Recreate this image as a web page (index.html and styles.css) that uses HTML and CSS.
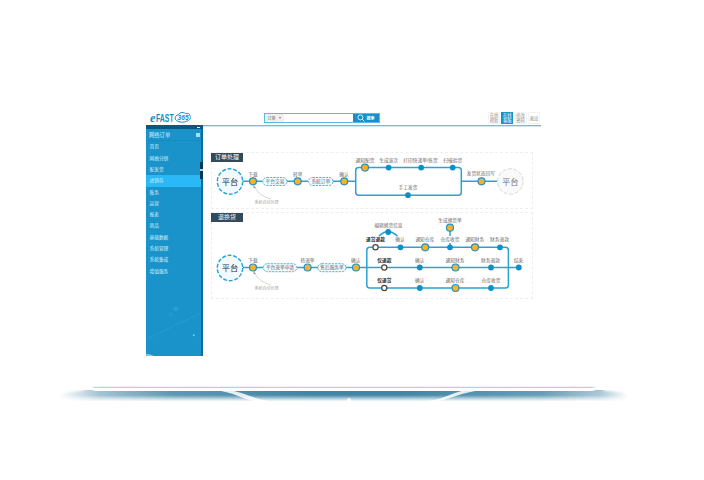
FILE: index.html
```
<!DOCTYPE html>
<html>
<head>
<meta charset="utf-8">
<title>eFAST 365</title>
<link rel="stylesheet" href="styles.css">
</head>
<body>
<div class="screen">
  <header class="topbar">
    <svg class="logo" width="48" height="14" viewBox="148 111 48 14">
      <text x="150" y="122.300" class="logo-e" textLength="5.500" lengthAdjust="spacingAndGlyphs">e</text>
      <text x="156" y="122" class="logo-name" textLength="17.700" lengthAdjust="spacingAndGlyphs">FAST</text>
      <path d="M178 121.300c-4-1-3.400-6 .2-6.500c1.800-3 6-2.600 7.300-1.200c2-.8 4.300.1 4.300 2c1.700 2.500-.5 5.500-3.300 5.500c-2.500 1.400-6 1.500-8.500.2z" class="cloud"/>
      <text x="177.600" y="120.200" class="logo-num" textLength="11" lengthAdjust="spacingAndGlyphs">365</text>
    </svg>
    <div class="search">
      <span class="kind">订单<i class="caret"></i></span>
      <span class="field"></span>
      <span class="go"><svg width="8" height="8" viewBox="0 0 8 8"><circle cx="3.400" cy="3.400" r="2.500"/><path d="M5.300 5.300L7.400 7.400"/></svg>搜索</span>
    </div>
    <nav class="tools">
      <span>在线<br>帮助</span><span class="on">在线<br>客服</span><span>修改<br>密码</span><span>退出</span>
    </nav>
  </header>
  <div class="main">
    <aside class="side">
      <div class="strip"><i></i></div>
      <div class="side-title">网络订单<i></i></div>
      <ul>
        <li>首页</li><li>网络分销</li><li>配发货</li><li class="active">进销存</li><li>账务</li><li>运营</li><li>报表</li><li>商品</li><li>基础数据</li><li>系统管理</li><li>系统集成</li><li>增值服务</li>
      </ul>
      <svg class="glow" width="55" height="80" viewBox="0 0 55 80">
        <path d="M0 63L54 37" class="ray"/>
        <circle cx="30" cy="32" r="2.500" class="spot"/><circle cx="25" cy="38" r="2" class="spot faint"/><circle cx="48" cy="59" r="1" class="star"/>
        <path d="M0 77.500Q5 78 8 80H0z" class="star"/>
      </svg>
      <div class="handle"></div>
    </aside>
    <main class="content">
      <section class="panel orders">
        <h2>订单处理</h2>
        <svg class="flow" width="322" height="57" viewBox="211 152 322 57">
          <g class="wire">
            <path d="M243 181.300H262.500M287 181.300H308M333 181.300H355.500M461.500 181.300H497"/>
            <rect x="355.700" y="167.500" width="105.600" height="27.700" rx="3"/>
          </g>
          <circle cx="230" cy="181.500" r="12.700" class="hub"/><text x="230" y="184.700" class="hub-text">平台</text>
          <circle cx="510.300" cy="181.500" r="12.700" class="hub end"/><text x="510.300" y="184.700" class="hub-text end-text">平台</text>
          <rect x="262.800" y="177.500" width="24.200" height="8" rx="4" class="pill"/><rect x="308.600" y="177.500" width="24.400" height="8" rx="4" class="pill"/>
          <g class="key"><circle cx="253" cy="181.300" r="3.500"/><circle cx="297.700" cy="181.300" r="3.500"/><circle cx="344.200" cy="181.300" r="3.500"/><circle cx="365" cy="167.600" r="3.500"/><circle cx="481.500" cy="181.300" r="3.500"/></g>
          <g class="dot"><circle cx="388.600" cy="167.600" r="2.900"/><circle cx="421.200" cy="167.600" r="2.900"/><circle cx="452.700" cy="167.600" r="2.900"/><circle cx="408" cy="195.200" r="2.900"/></g>
          <g class="label">
            <text x="253" y="175.500">下载</text><text x="297.700" y="175.500">转单</text><text x="344" y="175.500">确认</text>
            <text x="275" y="183.200">平台交易</text><text x="320.800" y="183.200">系统订单</text>
            <text x="365" y="161.700">通知配货</text><text x="388.700" y="161.700">生成波次</text><text x="420.500" y="161.700" textLength="34.500">打印快递单/拣货</text><text x="452.700" y="161.700">扫描验货</text>
            <text x="408" y="189.300">手工发货</text><text x="480.800" y="175.200">发货状态回写</text>
          </g>
          <path d="M254.500 187Q259 196 271 199" class="note-line"/><path d="M253.500 185.500l2.300 2-2 .7z" class="tip"/>
          <text x="266.500" y="203.500" class="note">系统自动处理</text>
        </svg>
      </section>
      <section class="panel returns">
        <h2>退换货</h2>
        <svg class="flow" width="322" height="87" viewBox="211 212 322 87">
          <g class="wire">
            <path d="M243 267.500H263M297 267.500H318M346 267.500H519M450 228V247"/>
            <rect x="366.800" y="247.300" width="141.600" height="40.800" rx="3"/>
            <path d="M378.800 236.200Q388 227 397.500 236.200"/>
          </g>
          <circle cx="230" cy="268" r="12.700" class="hub"/><text x="230" y="271.200" class="hub-text">平台</text>
          <rect x="263.300" y="263.700" width="33.500" height="8" rx="4" class="pill"/><rect x="317.800" y="263.700" width="28" height="8" rx="4" class="pill"/>
          <g class="key"><circle cx="253" cy="267.500" r="3.500"/><circle cx="307.600" cy="267.500" r="3.500"/><circle cx="356" cy="267.500" r="3.500"/><circle cx="425.200" cy="247.300" r="3.500"/><circle cx="475" cy="247.300" r="3.500"/><circle cx="450" cy="227.700" r="3.500"/><circle cx="455.500" cy="267.500" r="3.500"/><circle cx="455.500" cy="288" r="3.500"/></g>
          <g class="dot"><circle cx="388.200" cy="232" r="2.900"/><circle cx="400.500" cy="247.300" r="2.900"/><circle cx="450" cy="247.300" r="2.900"/><circle cx="500" cy="247.300" r="2.900"/><circle cx="419.800" cy="267.500" r="2.900"/><circle cx="491" cy="267.500" r="2.900"/><circle cx="518.800" cy="267.500" r="2.900"/><circle cx="419.800" cy="288" r="2.900"/><circle cx="491" cy="288" r="2.900"/></g>
          <g class="open"><circle cx="375.500" cy="247.300" r="2.600"/><circle cx="384.300" cy="267.500" r="2.600"/><circle cx="384.300" cy="288" r="2.600"/></g>
          <rect x="440" y="236" width="20" height="7" class="mask"/>
          <g class="label">
            <text x="253" y="261.700">下载</text><text x="307.500" y="261.700">转退单</text><text x="355.800" y="261.700">确认</text>
            <text x="280" y="269.400">平台退单申请</text><text x="332" y="269.400">售后服务单</text>
            <text x="388.500" y="227.400">编辑换货信息</text><text x="450" y="221.900">生成换货单</text>
            <text x="400" y="241.400">确认</text><text x="424.800" y="241.400">通知仓库</text><text x="450" y="241.400">仓库收货</text><text x="474.800" y="241.400">通知财务</text><text x="499.500" y="241.400">财务退款</text>
            <text x="419.800" y="261.700">确认</text><text x="455" y="261.700">通知财务</text><text x="490.500" y="261.700">财务退款</text><text x="518.600" y="262.200">结束</text>
            <text x="419.800" y="282">确认</text><text x="455" y="282">通知仓库</text><text x="491" y="282">仓库收货</text>
          </g>
          <g class="label strong"><text x="375.500" y="241.400">退货退款</text><text x="384.300" y="261.700">仅退款</text><text x="384.300" y="282">仅退货</text></g>
          <path d="M254.500 273Q259 282 271 285" class="note-line"/><path d="M253.500 271.500l2.300 2-2 .7z" class="tip"/>
          <text x="266.500" y="289.900" class="note">系统自动处理</text>
        </svg>
      </section>
    </main>
  </div>
</div>
<svg class="base" width="704" height="30" viewBox="0 380 704 30">
  <defs>
    <linearGradient id="across"><stop offset="0" stop-color="#3b82a3" stop-opacity="0"/><stop offset=".07" stop-color="#3b82a3" stop-opacity=".5"/><stop offset=".2" stop-color="#3b82a3" stop-opacity=".85"/><stop offset=".45" stop-color="#3b82a3"/><stop offset=".6" stop-color="#3b82a3"/><stop offset=".85" stop-color="#3b82a3" stop-opacity=".8"/><stop offset=".95" stop-color="#3b82a3" stop-opacity=".45"/><stop offset="1" stop-color="#3b82a3" stop-opacity="0"/></linearGradient>
    <linearGradient id="down" x2="0" y2="1"><stop offset="0" stop-color="#fff" stop-opacity="0"/><stop offset=".45" stop-color="#fff" stop-opacity=".05"/><stop offset=".8" stop-color="#fff" stop-opacity=".7"/><stop offset="1" stop-color="#fff"/></linearGradient>
  </defs>
  <rect x="60" y="390" width="568" height="11" fill="url(#across)"/>
  <rect x="55" y="390" width="578" height="11.500" fill="url(#down)"/>
  <path d="M56 387H84V390.500Q70 391 56 394zM632 387H604V390.500Q618 391 632 394z" class="fade"/>
  <path d="M92 387.500H600" class="edge"/><path d="M92 386.500H600" class="edge thin"/>
  <path d="M84 385Q91 389.500 98 389.500H590Q596 389.500 603 385" class="rim"/>
  <path d="M216 388Q235 390 250 396T285 402H258Q247 400 238 396T210 389zM479 388Q460 390 447 396T410 402H435Q445 400 456 396T487 389z" class="sweep"/>
  <circle cx="349" cy="400" r="2" class="shine"/>
</svg>
</body>
</html>
```
FILE: styles.css
```
* { box-sizing: border-box; }
body { margin: 0; width: 704px; height: 480px; overflow: hidden; background: #fff; font-family: "Liberation Sans", "Noto Sans CJK SC", sans-serif; color: #666; }
.screen { width: 395px; height: 246px; margin: 110px 0 0 146px; display: flex; flex-direction: column; }
.topbar { height: 15px; flex: none; display: flex; align-items: center; padding-left: 2px; }
.logo { display: block; flex: none; margin-top: 1px; }
.logo text { fill: #158fc4; }
.logo-e { font: italic bold 12px "Liberation Serif", serif; }
.logo-name { font: bold 11px "Liberation Sans", sans-serif; }
.cloud { fill: #fff; stroke: #158fc4; stroke-width: 1; }
.logo-num { font: italic bold 7.500px "Liberation Sans", sans-serif; }
.search { width: 116px; height: 10px; margin-left: 67.500px; margin-top: 1px; border: 1px solid #58b9e3; display: flex; font-size: 4px; }
.kind { width: 19px; background: #f0f0f0; display: flex; align-items: center; justify-content: center; gap: 3px; }
.caret { border: 1.500px solid transparent; border-top: 2px solid #777; border-bottom: 0; }
.field { flex: 1; }
.go { width: 26px; background: #1791c9; color: #fff; display: flex; align-items: center; justify-content: center; gap: 2px; font-weight: bold; }
.go svg { fill: none; stroke: #fff; stroke-width: .8; }
.tools { display: flex; gap: 1.300px; margin-left: 108.500px; margin-top: 1px; font-size: 4.300px; line-height: 5px; text-align: center; }
.tools span { width: 12px; height: 12px; border: 1px solid #f3f3f3; display: flex; align-items: center; justify-content: center; color: #888; white-space: nowrap; }
.tools .on { background: #1393ca; border-color: #1393ca; color: #fff; }
.main { display: flex; flex: 1; min-height: 0; }
.side { width: 57px; background: #1993ca; border-right: 2px solid #0b6c99; position: relative; color: #d8f0fb; display: flex; flex-direction: column; }
.strip { height: 4.500px; background: #09597e; display: flex; justify-content: flex-end; align-items: center; margin-right: -2px; padding-right: 3px; }
.strip i { width: 3px; height: 1px; background: #fff; }
.side-title { height: 12px; display: flex; align-items: center; justify-content: space-between; padding: 0 1px 0 3px; font-size: 5.300px; border-bottom: 1px solid #178cc1; }
.side-title i { width: 4px; height: 4px; background: #a9def6; }
.side ul { list-style: none; margin: 0; padding: 0; font-size: 4.700px; }
.side li { height: 11.300px; line-height: 12px; padding-left: 3.500px; }
.side .active { background: #2bb8f7; }
.glow { margin-top: auto; }
.ray { stroke: #43a8d8; stroke-width: .6; opacity: .6; fill: none; }
.spot { fill: #3ba5d5; opacity: .6; }
.faint { opacity: .3; }
.star { fill: #7ccbee; }
.handle { position: absolute; right: -2px; top: 37px; width: 3px; height: 17px; background: linear-gradient(#06364f 40%, #b6d4e2 40%, #b6d4e2 50%, #06364f 50%); }
.content { flex: 1; background: linear-gradient(#62c0ea 1px, #c9e9f7 1px, #c9e9f7 2px, #fff 2px); padding: 27px 0 0 8px; }
.panel { width: 322px; border: 1px dashed #efefef; display: grid; }
.panel > * { grid-area: 1 / 1; }
.orders { height: 57px; }
.returns { height: 87px; margin-top: 3px; }
.panel h2 { margin: 0 0 0 -1px; width: 32px; height: 9px; background: #34495a; color: #fff; font-size: 6px; line-height: 8.500px; text-align: center; font-weight: normal; }
.flow { display: block; margin: -1px; }
.wire { fill: none; stroke: #2ba2d5; stroke-width: 1.500; }
.hub { fill: #f0faff; stroke: #2ba2d5; stroke-width: 1.400; stroke-dasharray: 4 1.700; }
.hub.end { fill: #fafafa; stroke: #ccc; stroke-width: .8; }
.hub-text { font-size: 8.300px; fill: #333; text-anchor: middle; }
.end-text { fill: #777; }
.pill { fill: #f4fbff; stroke: #2ba2d5; stroke-width: .8; stroke-dasharray: 2.300 1; }
.key { fill: #f8b02d; stroke: #2292c2; stroke-width: 1.200; }
.dot { fill: #0c90ca; }
.open { fill: #fff; stroke: #444; stroke-width: 1.200; }
.mask { fill: #fff; }
.label { font-size: 4.700px; fill: #666; text-anchor: middle; }
.strong { font-weight: bold; fill: #222; }
.note { font-size: 4px; fill: #aaa; text-anchor: middle; }
.note-line { fill: none; stroke: #bbb; stroke-width: .6; }
.tip { fill: #888; }
.base { display: block; margin-top: 24px; }
.edge { stroke: #b4d2df; stroke-width: 1; }
.thin { stroke: #edf4f7; }
.rim { fill: none; stroke: #fff; stroke-width: 3; }
.sweep { fill: #fff; opacity: .85; }
.fade { fill: #fff; filter: blur(1px); }
.shine { fill: #fff; }
```
